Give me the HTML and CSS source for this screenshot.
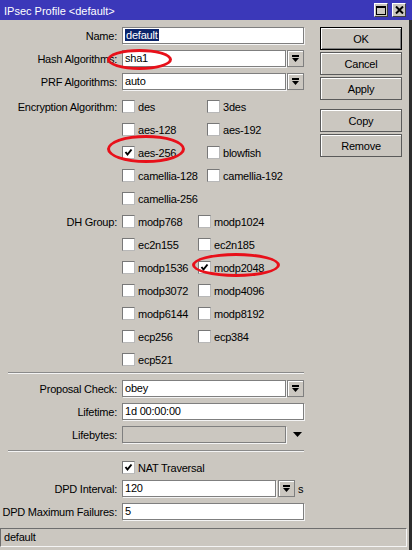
FILE: index.html
```html
<!DOCTYPE html>
<html>
<head>
<meta charset="utf-8">
<link rel="stylesheet" href="styles.css">
</head>
<body>
<div class="window">
  <div class="titlebar">
    <span class="title">IPsec Profile &lt;default&gt;</span>
    <div class="tbtns">
      <span class="tbtn"><svg width="10" height="9" viewBox="0 0 10 9"><rect x="0.5" y="0.5" width="9" height="8" fill="none" stroke="#000"/><rect x="0" y="0" width="10" height="2" fill="#000"/></svg></span>
      <span class="tbtn"><svg width="9" height="8" viewBox="0 0 9 8"><path d="M1 0.5 L8 7.5 M8 0.5 L1 7.5" stroke="#000" stroke-width="2" fill="none"/></svg></span>
    </div>
  </div>
  <div class="body">
    <div class="main">
      <div class="form">
        <div class="row"><span class="lbl">Name:</span><div class="field full"><span class="sel">default</span></div></div>
        <div class="row"><span class="lbl">Hash Algorithms:</span><div class="field combo">sha1</div><span class="ddbtn"><svg width="7" height="7" viewBox="0 0 7 7"><rect x="0" y="0" width="7" height="2" fill="#000"/><polygon points="0,3 7,3 3.5,7" fill="#000"/></svg></span></div>
        <div class="row"><span class="lbl">PRF Algorithms:</span><div class="field combo">auto</div><span class="ddbtn"><svg width="7" height="7" viewBox="0 0 7 7"><rect x="0" y="0" width="7" height="2" fill="#000"/><polygon points="0,3 7,3 3.5,7" fill="#000"/></svg></span></div>

        <div class="row cb"><span class="lbl">Encryption Algorithm:</span><span class="opt enc"><span class="box"></span>des</span><span class="opt"><span class="box"></span>3des</span></div>
        <div class="row cb"><span class="lbl"></span><span class="opt enc"><span class="box"></span>aes-128</span><span class="opt"><span class="box"></span>aes-192</span></div>
        <div class="row cb"><span class="lbl"></span><span class="opt enc"><span class="box"><svg width="11" height="11" viewBox="0 0 11 11"><path d="M2.5 5 L4.5 7.5 L8.5 2.5" stroke="#000" stroke-width="2" fill="none"/></svg></span>aes-256</span><span class="opt"><span class="box"></span>blowfish</span></div>
        <div class="row cb"><span class="lbl"></span><span class="opt enc"><span class="box"></span>camellia-128</span><span class="opt"><span class="box"></span>camellia-192</span></div>
        <div class="row cb"><span class="lbl"></span><span class="opt enc"><span class="box"></span>camellia-256</span></div>

        <div class="row cb"><span class="lbl">DH Group:</span><span class="opt dh"><span class="box"></span>modp768</span><span class="opt"><span class="box"></span>modp1024</span></div>
        <div class="row cb"><span class="lbl"></span><span class="opt dh"><span class="box"></span>ec2n155</span><span class="opt"><span class="box"></span>ec2n185</span></div>
        <div class="row cb"><span class="lbl"></span><span class="opt dh"><span class="box"></span>modp1536</span><span class="opt"><span class="box"><svg width="11" height="11" viewBox="0 0 11 11"><path d="M2.5 5 L4.5 7.5 L8.5 2.5" stroke="#000" stroke-width="2" fill="none"/></svg></span>modp2048</span></div>
        <div class="row cb"><span class="lbl"></span><span class="opt dh"><span class="box"></span>modp3072</span><span class="opt"><span class="box"></span>modp4096</span></div>
        <div class="row cb"><span class="lbl"></span><span class="opt dh"><span class="box"></span>modp6144</span><span class="opt"><span class="box"></span>modp8192</span></div>
        <div class="row cb"><span class="lbl"></span><span class="opt dh"><span class="box"></span>ecp256</span><span class="opt"><span class="box"></span>ecp384</span></div>
        <div class="row cb"><span class="lbl"></span><span class="opt dh"><span class="box"></span>ecp521</span></div>

        <div class="sep sep1"></div>

        <div class="row"><span class="lbl">Proposal Check:</span><div class="field combo">obey</div><span class="ddbtn"><svg width="7" height="7" viewBox="0 0 7 7"><rect x="0" y="0" width="7" height="2" fill="#000"/><polygon points="0,3 7,3 3.5,7" fill="#000"/></svg></span></div>
        <div class="row"><span class="lbl">Lifetime:</span><div class="field full">1d 00:00:00</div></div>
        <div class="row"><span class="lbl">Lifebytes:</span><div class="field combo disabled"></div><svg class="darrow" width="9" height="5" viewBox="0 0 9 5"><polygon points="0,0 9,0 4.5,5" fill="#000"/></svg></div>

        <div class="sep sep2"></div>

        <div class="row cb"><span class="lbl"></span><span class="opt"><span class="box"><svg width="11" height="11" viewBox="0 0 11 11"><path d="M2.5 5 L4.5 7.5 L8.5 2.5" stroke="#000" stroke-width="2" fill="none"/></svg></span>NAT Traversal</span></div>
        <div class="row"><span class="lbl">DPD Interval:</span><div class="field short">120</div><span class="ddbtn"><svg width="7" height="7" viewBox="0 0 7 7"><rect x="0" y="0" width="7" height="2" fill="#000"/><polygon points="0,3 7,3 3.5,7" fill="#000"/></svg></span><span class="unit">s</span></div>
        <div class="row"><span class="lbl">DPD Maximum Failures:</span><div class="field full">5</div></div>
      </div>
      <div class="buttons">
        <div class="btn default">OK</div>
        <div class="btn">Cancel</div>
        <div class="btn gapafter">Apply</div>
        <div class="btn">Copy</div>
        <div class="btn">Remove</div>
      </div>
    </div>
    <div class="status">default</div>
  </div>
  <div class="mark mark1"></div>
  <div class="mark mark2"></div>
  <div class="mark mark3"></div>
</div>
</body>
</html>
```
FILE: styles.css
```css
html, body {
  margin: 0;
  padding: 0;
}
body {
  width: 412px;
  height: 550px;
  overflow: hidden;
  font-family: "Liberation Sans", Arial, sans-serif;
  font-size: 11px;
  color: #000;
  background: #cbc7c0;
}
.window {
  position: relative;
  width: 412px;
  height: 550px;
}
.titlebar {
  height: 20px;
  background: #3b38b9;
  color: #fff;
  display: flex;
  align-items: center;
  justify-content: space-between;
  box-sizing: border-box;
  padding: 1px 6px 0 4px;
}
.title {
  font-size: 11px;
  white-space: nowrap;
}
.tbtns {
  display: flex;
  gap: 4px;
  margin-top: -1px;
}
.tbtn {
  width: 14px;
  height: 14px;
  box-sizing: border-box;
  background: #cbc7c0;
  border: 1px solid;
  border-color: #fff #404040 #404040 #fff;
  display: flex;
  align-items: center;
  justify-content: center;
}
.body {
  height: 530px;
  box-sizing: border-box;
  border-right: 3px solid #2c2c2c;
  letter-spacing: -0.22px;
}
.main {
  display: flex;
}
.form {
  width: 320px;
  padding-top: 4px;
}
.row {
  display: flex;
  align-items: center;
  height: 23px;
  box-sizing: border-box;
}
.row.cb {
  padding-top: 4px;
}
.lbl {
  width: 122px;
  flex: none;
  box-sizing: border-box;
  padding-right: 5px;
  text-align: right;
  white-space: nowrap;
}
.field {
  height: 17px;
  box-sizing: border-box;
  background: #fff;
  border: 1px solid #7f7f7f;
  box-shadow: 1px 1px 0 #f4f4f4;
  padding-left: 2px;
  line-height: 15px;
  white-space: nowrap;
  overflow: hidden;
}
.field.full { width: 182px; }
.field.combo { width: 164px; }
.field.short { width: 154px; }
.field.disabled { background: #cbc7c0; }
.sel {
  background: #0a246a;
  color: #fff;
  padding: 0 1px;
}
.ddbtn {
  width: 17px;
  height: 17px;
  box-sizing: border-box;
  margin-left: 1px;
  background: #cbc7c0;
  border: 1px solid #7f7f7f;
  box-shadow: inset 1px 1px 0 #fff;
  display: flex;
  align-items: center;
  justify-content: center;
}
.short + .ddbtn { margin-left: 2px; }
.darrow { margin-left: 7px; }
.unit { margin-left: 3px; }
.opt {
  display: flex;
  align-items: center;
  white-space: nowrap;
}
.opt.enc { width: 85px; }
.opt.dh { width: 76px; }
.box {
  width: 13px;
  height: 13px;
  box-sizing: border-box;
  background: #fff;
  border: 1px solid;
  border-color: #787878 #b8b8b8 #b8b8b8 #787878;
  margin-right: 3px;
  display: flex;
  align-items: center;
  justify-content: center;
}
.sep {
  margin-left: 8px;
  width: 296px;
  height: 2px;
  box-sizing: border-box;
  border-top: 1px solid #8a8a8a;
  border-bottom: 1px solid #f4f4f4;
}
.sep1 { margin-top: 3px; margin-bottom: 3px; }
.sep2 { margin-top: 4px; margin-bottom: 2px; }
.buttons {
  padding-top: 7px;
  display: flex;
  flex-direction: column;
  gap: 2px;
}
.btn {
  width: 82px;
  height: 23px;
  box-sizing: border-box;
  border: 1px solid #5a5a5a;
  box-shadow: inset 1px 1px 0 #fff;
  display: flex;
  align-items: center;
  justify-content: center;
}
.btn.default {
  border-color: #000;
  box-shadow: inset 1px 1px 0 #fff, inset -1px -1px 0 #808080;
}
.btn.gapafter { margin-bottom: 7px; }
.status {
  margin-top: 5px;
  width: 407px;
  height: 19px;
  box-sizing: border-box;
  border: 1px solid;
  border-color: #6e6e6e #f4f4f4 #f4f4f4 #6e6e6e;
  padding-left: 3px;
  line-height: 17px;
}
.mark {
  position: absolute;
  box-sizing: border-box;
  border: 3px solid #e8101a;
  border-radius: 50%;
}
.mark1 { left: 107px; top: 49px; width: 65px; height: 21px; }
.mark2 { left: 107px; top: 135px; width: 78px; height: 28px; }
.mark3 { left: 192px; top: 253px; width: 88px; height: 24px; }
```
